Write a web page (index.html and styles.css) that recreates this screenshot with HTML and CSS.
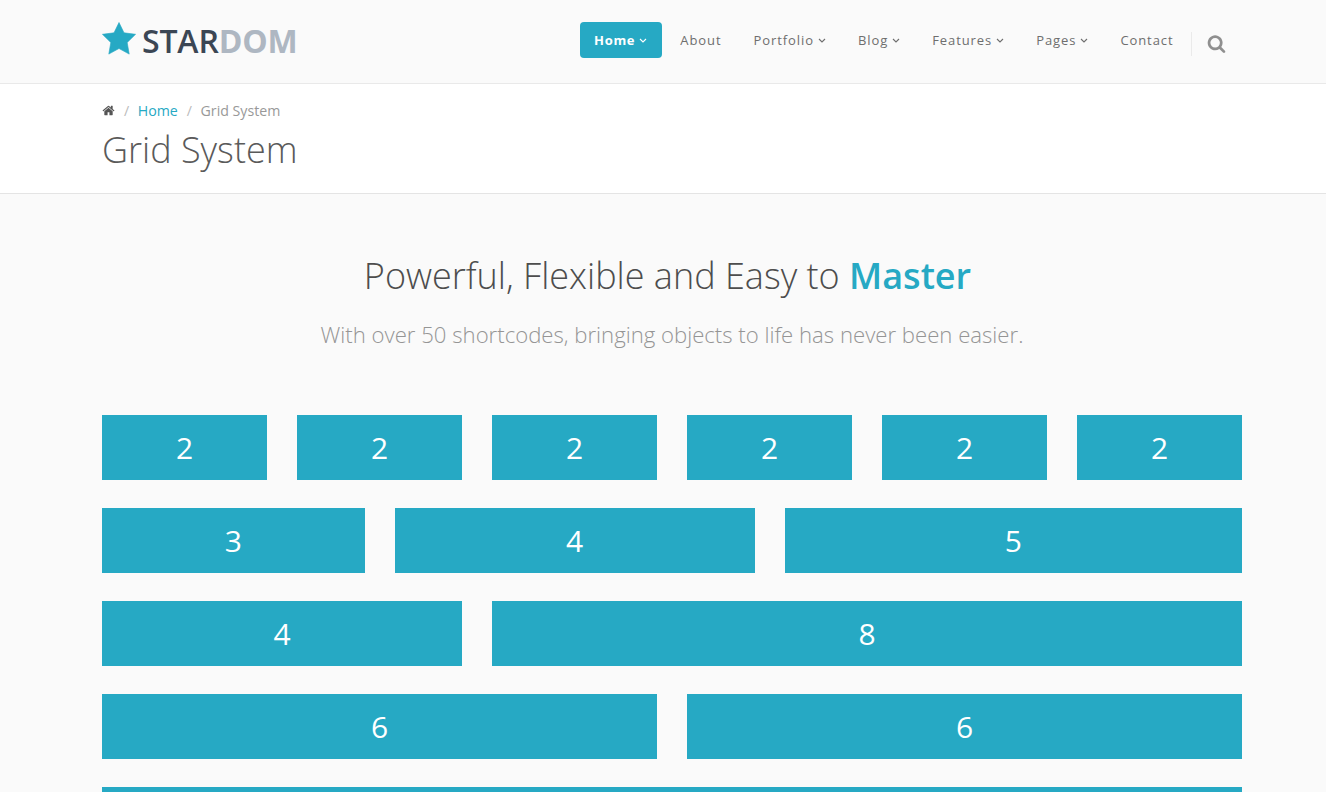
FILE: index.html
```html
<!DOCTYPE html>
<html lang="en">
<head>
<meta charset="utf-8">
<title>Grid System</title>
<link rel="stylesheet" href="styles.css">
</head>
<body>
<div class="page">
<header class="header">
  <div class="container header-inner">
    <a class="logo">
      <svg class="logo-star" viewBox="0 0 34 34"><path d="M17 .5l5 10.300 11.600 1.500-8.400 8.200 2 11.600L17 26.500 6.800 32.100l2-11.600L.4 12.300 12 10.800z" stroke="#26a9c4" stroke-width=".6" stroke-linejoin="round"/></svg>
      <span class="logo-text">STAR<b>DOM</b></span>
    </a>
    <nav class="nav">
      <a class="nav-item active">Home<svg class="caret" viewBox="0 0 8 5"><path d="M1 1l3 3 3-3"/></svg></a>
      <a class="nav-item">About</a>
      <a class="nav-item">Portfolio<svg class="caret" viewBox="0 0 8 5"><path d="M1 1l3 3 3-3"/></svg></a>
      <a class="nav-item">Blog<svg class="caret" viewBox="0 0 8 5"><path d="M1 1l3 3 3-3"/></svg></a>
      <a class="nav-item">Features<svg class="caret" viewBox="0 0 8 5"><path d="M1 1l3 3 3-3"/></svg></a>
      <a class="nav-item">Pages<svg class="caret" viewBox="0 0 8 5"><path d="M1 1l3 3 3-3"/></svg></a>
      <a class="nav-item">Contact</a>
      <span class="nav-search">
        <svg class="search-icon" viewBox="0 0 1792 1792"><path d="M1216 832q0-185-131.500-316.500t-316.500-131.500-316.500 131.500-131.500 316.500 131.500 316.500 316.500 131.500 316.500-131.500 131.500-316.500zm512 832q0 52-38 90t-90 38q-54 0-90-38l-343-342q-179 124-399 124-143 0-273.500-55.500t-225-150-150-225-55.500-273.500 55.500-273.500 150-225 225-150 273.500-55.500 273.500 55.500 225 150 150 225 55.500 273.500q0 220-124 399l343 343q37 37 37 90z"/></svg>
      </span>
    </nav>
  </div>
</header>
<section class="title-bar">
  <div class="container">
    <div class="crumbs">
      <svg class="home-icon" viewBox="0 0 1792 1792"><path d="M1472 992v480q0 26-19 45t-45 19h-384v-384h-256v384h-384q-26 0-45-19t-19-45v-480q0-1 .5-3t.5-3l575-474 575 474q1 2 1 6zm223-69l-62 74q-8 9-21 11h-3q-13 0-21-7l-692-577-692 577q-12 8-24 7-13-2-21-11l-62-74q-8-10-7-23.500t11-21.500l719-599q32-26 76-26t76 26l244 204v-195q0-14 9-23t23-9h192q14 0 23 9t9 23v408l219 182q10 8 11 21.500t-7 23.500z"/></svg>
      <span class="sep">/</span><a class="crumb-link">Home</a><span class="sep">/</span><span class="crumb-current">Grid System</span>
    </div>
    <h1 class="page-title">Grid System</h1>
  </div>
</section>
<main class="container main">
  <h2 class="headline">Powerful, Flexible and Easy to <strong>Master</strong></h2>
  <p class="lead">With over 50 shortcodes, bringing objects to life has never been easier.</p>
  <div class="grid">
    <div class="cell span-2">2</div><div class="cell span-2">2</div><div class="cell span-2">2</div><div class="cell span-2">2</div><div class="cell span-2">2</div><div class="cell span-2">2</div>
    <div class="cell span-3">3</div><div class="cell span-4">4</div><div class="cell span-5">5</div>
    <div class="cell span-4">4</div><div class="cell span-8">8</div>
    <div class="cell span-6">6</div><div class="cell span-6">6</div>
    <div class="cell span-12"></div>
  </div>
</main>
</div>
</body>
</html>
```
FILE: styles.css
```css
* { box-sizing: border-box; }
html, body { margin: 0; padding: 0; }
body {
  background: #fafafa;
  font-family: "Open Sans", "Liberation Sans", sans-serif;
  color: #555;
}
.page { height: 792px; overflow: hidden; }
.container { width: 1140px; margin-left: 102px; }

.header { height: 84px; background: #fafafa; border-bottom: 1px solid #e9e9e9; }
.header-inner { display: flex; justify-content: space-between; height: 83px; }
.logo { display: flex; align-items: center; height: 83px; margin-top: -1px; }
.logo-star { width: 34px; height: 34px; fill: #26a9c4; margin-top: -3px; flex: none; }
.logo-text {
  margin-left: 6px;
  font-size: 32px;
  font-weight: 600;
  line-height: 40px;
  letter-spacing: -0.15px;
  color: #3b4654;
}
.logo-text b { font-weight: 700; color: #aeb7c2; }

.nav { display: flex; align-items: flex-start; padding-top: 22px; width: 662px; }
.nav-item {
  display: flex;
  align-items: center;
  height: 36px;
  padding: 0 14px;
  margin-right: 4px;
  font-size: 13px;
  letter-spacing: 0.92px;
  color: #6e6e6e;
  white-space: nowrap;
}
.nav-item.active {
  background: #26a9c4;
  color: #fff;
  font-weight: 700;
  letter-spacing: 0.7px;
  border-radius: 4px;
  padding-right: 15px;
}
.caret { width: 8px; height: 5px; margin-left: 4px; margin-top: 1px; fill: none; stroke: currentColor; stroke-width: 1.1; }
.nav-search { display: flex; align-items: center; height: 24px; margin-top: 10px; margin-left: -1px; padding-left: 15px; border-left: 1px solid #eaeaea; }
.search-icon { width: 19px; height: 19px; fill: #8f8f8f; margin-top: -2px; }

.title-bar { height: 110px; background: #fff; border-bottom: 1px solid #e4e4e4; padding-top: 16px; }
.crumbs { display: flex; align-items: center; height: 20px; font-size: 14.200px; color: #999; }
.home-icon { width: 13px; height: 13px; fill: #555; margin-top: 1px; }
.sep { margin: 0 8.500px 0 9px; color: #bbb; }
.crumb-link { color: #26a9c4; }
.crumb-current { color: #999; }
.page-title { margin: 9px 0 0; font-size: 36px; line-height: 42px; font-weight: 300; color: #5a5a5a; }

.main { padding-top: 58px; }
.headline { margin: 0; padding-right: 9px; text-align: center; font-size: 36px; line-height: 48px; font-weight: 300; color: #4d4d4d; }
.headline strong { font-weight: 600; color: #26a9c4; }
.lead { margin: 18px 0 0; text-align: center; font-size: 22.150px; line-height: 32px; font-weight: 300; color: #959595; }

.grid { display: grid; grid-template-columns: repeat(12, 1fr); column-gap: 30px; row-gap: 28px; margin-top: 65px; }
.cell {
  display: flex;
  align-items: center;
  justify-content: center;
  height: 65px;
  background: #26a9c4;
  color: #fff;
  font-size: 30px;
}
.span-2 { grid-column: span 2; }
.span-3 { grid-column: span 3; }
.span-4 { grid-column: span 4; }
.span-5 { grid-column: span 5; }
.span-6 { grid-column: span 6; }
.span-8 { grid-column: span 8; }
.span-12 { grid-column: span 12; }
```
